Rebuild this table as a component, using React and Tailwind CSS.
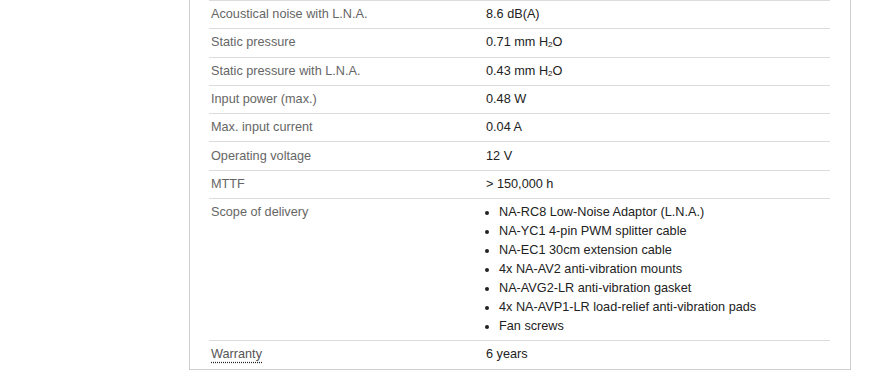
import React from "react";

const H2O = () => (
  <>
    H<span className="text-[8px] leading-none relative top-[1px]">2</span>O
  </>
);

const rows = [
  ["Acoustical noise with L.N.A.", "8.6 dB(A)"],
  ["Static pressure", <>0.71 mm <H2O /></>],
  ["Static pressure with L.N.A.", <>0.43 mm <H2O /></>],
  ["Input power (max.)", "0.48 W"],
  ["Max. input current", "0.04 A"],
  ["Operating voltage", "12 V"],
  ["MTTF", "> 150,000 h"],
];

const scope = [
  "NA-RC8 Low-Noise Adaptor (L.N.A.)",
  "NA-YC1 4-pin PWM splitter cable",
  "NA-EC1 30cm extension cable",
  "4x NA-AV2 anti-vibration mounts",
  "NA-AVG2-LR anti-vibration gasket",
  "4x NA-AVP1-LR load-relief anti-vibration pads",
  "Fan screws",
];

function Row({ label, children }) {
  return (
    <div className="flex border-t border-[#dcdcdc] pt-[4.15px] pb-[4.15px] leading-[19px]">
      <div className="w-[275px] shrink-0 pl-[2px] text-[#666]">{label}</div>
      <div className="flex-1 pl-[2px] text-[#222]">{children}</div>
    </div>
  );
}

export default function App() {
  return (
    <div
      className="w-[879px] h-[372px] bg-white overflow-hidden text-[12.7px]"
      style={{ fontFamily: '"Liberation Sans", Arial, sans-serif' }}
    >
      <div className="ml-[189px] w-[662px] border-x border-b border-[#cfcfcf] pl-[19px] pr-[20px]">
        {rows.map(([l, v], i) => (
          <Row key={i} label={l}>
            {v}
          </Row>
        ))}
        <Row label="Scope of delivery">
          <ul className="m-0 p-0">
            {scope.map((s, i) => (
              <li key={i} className="flex items-center leading-[19px]">
                <span className="w-[4px] h-[4px] rounded-full bg-[#222] ml-[-1px] mr-[10px] shrink-0" />
                <span>{s}</span>
              </li>
            ))}
          </ul>
        </Row>
        <Row
          label={
            <span className="text-[#555] underline decoration-dotted decoration-[#222] underline-offset-[3px]">
              Warranty
            </span>
          }
        >
          6 years
        </Row>
      </div>
    </div>
  );
}
